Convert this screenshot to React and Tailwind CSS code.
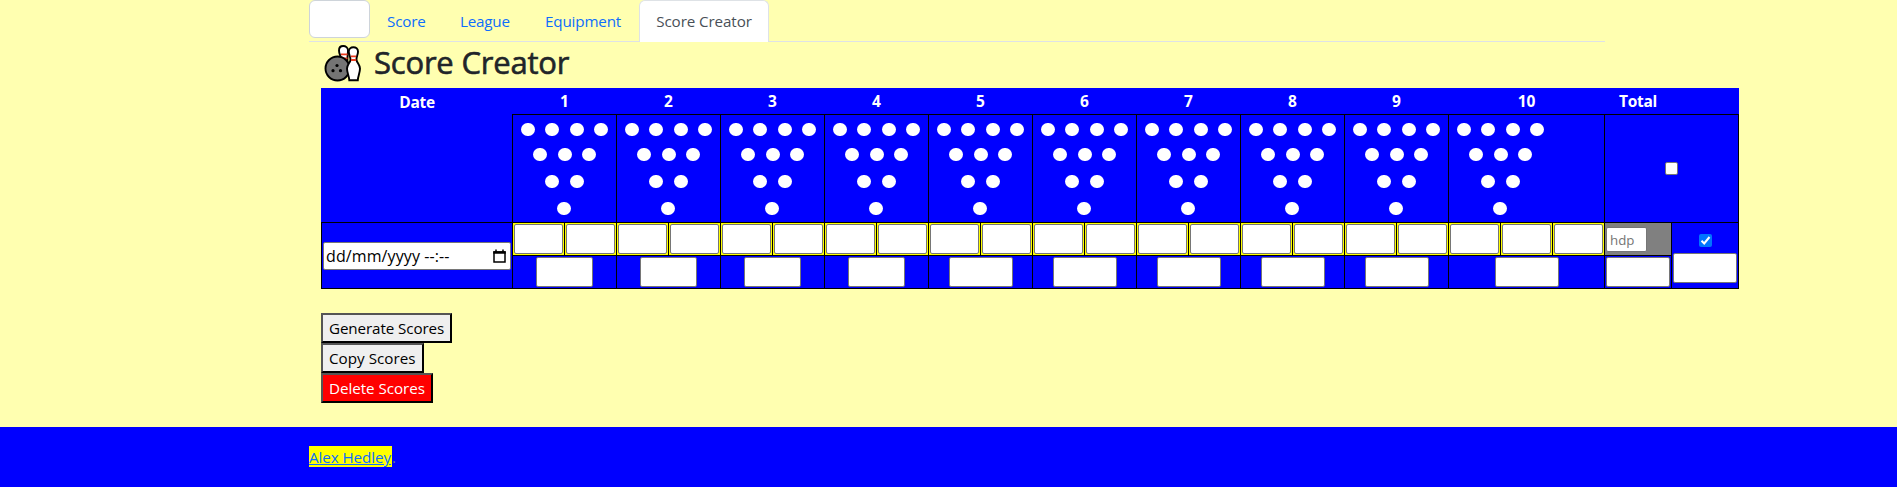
import React from "react";

const frames = [1, 2, 3, 4, 5, 6, 7, 8, 9, 10];

function Pins() {
  return (
    <div className="flex w-[103px] flex-col items-center pt-[8px]">
      {[
        { n: 4, h: "h-[25px]" },
        { n: 3, h: "h-[27px]" },
        { n: 2, h: "h-[27px]" },
        { n: 1, h: "h-[13px] mr-px" },
      ].map((row) => (
        <div key={row.n} className={`flex gap-[10.4px] ${row.h}`}>
          {Array.from({ length: row.n }, (_, i) => (
            <span key={i} className="h-[13px] w-[14px] rounded-full bg-white" />
          ))}
        </div>
      ))}
    </div>
  );
}

function Throw() {
  return (
    <div className="flex h-full flex-1 border-l border-black bg-[#ffff00] p-px">
      <input className="h-full w-full min-w-0 rounded-[2px] border border-[#767676] bg-white" />
    </div>
  );
}

function Frame({ number }) {
  const last = number === 10;
  return (
    <div className={`flex flex-col ${last ? "w-[156px]" : "w-[104px]"}`}>
      <div className="h-[26px] pt-px pl-px text-center text-[15.5px] leading-[24px] font-bold text-white">{number}</div>
      <div className="h-[108px] border-t border-l border-black">
        <Pins />
      </div>
      <div className="flex h-[33px] border-t border-black">
        <Throw />
        <Throw />
        {last && <Throw />}
      </div>
      <div className="flex h-[34px] justify-center border-y border-l border-black pt-px">
        <input className={`h-[30px] rounded-[2px] border border-[#767676] bg-white ${number > 4 ? "w-[64px]" : "mr-px w-[57px]"}`} />
      </div>
    </div>
  );
}

function BowlingIcon() {
  return (
    <svg className="h-[38px] w-[38px]" viewBox="0 0 38 38" stroke="#000" strokeWidth="1.9">
      <path d="M17 14C17 11 15 9 15 5.500C15 2.800 16.800 1 19.200 1S24 2.800 24 5.500C24 9 23 12 23.500 18L19 20Z" fill="#fff" />
      <path d="M17 9.300H23.500M17.200 13.300H23.500" stroke="#ea3b1e" strokeWidth="1.8" />
      <circle cx="13.500" cy="23.500" r="12" fill="#747474" />
      <g fill="#000" stroke="none">
        <circle cx="13" cy="20.500" r="1.600" />
        <circle cx="9" cy="25.700" r="1.600" />
        <circle cx="16.500" cy="25.700" r="1.600" />
      </g>
      <path d="M26.500 15C26.500 11.500 24.800 10 24.800 6.500C24.800 3.800 26.800 2.200 29.300 2.200S34 3.800 34 6.500C34 10 32.200 11.500 32.500 15C33 18 36 20 36 23.500C36 28 34 31 33.800 35.300H25.300C25.100 31 23 28 23 23.500C23 20 26 18 26.500 15Z" fill="#fff" />
      <path d="M26.800 11.300H32.200M27 15H32.200" stroke="#ea3b1e" strokeWidth="1.8" />
    </svg>
  );
}

function Calendar() {
  return (
    <svg className="h-[15px] w-[13px]" viewBox="0 0 13 15" fill="none" stroke="#000">
      <path d="M1 3H12V13H1Z" strokeWidth="1.500" />
      <path d="M.3 3.500H12.700" strokeWidth="2.500" />
      <path d="M3 .5V3M10 .5V3" strokeWidth="1.500" />
    </svg>
  );
}

export default function App() {
  const button =
    "h-[30px] border-2 border-t-[#555] border-l-[#555] border-r-black border-b-black pl-[6px] text-left leading-[26px] whitespace-nowrap";
  return (
    <div className="flex h-[487px] flex-col overflow-hidden bg-[#ffffb0] font-['Open_Sans','Noto_Sans',sans-serif] text-[15.2px] text-[#212529]">
      <nav className="ml-[309px] flex h-[42px] w-[1296px] border-b border-[#dee2e6] text-[#0d6efd]">
        <div className="h-[38px] w-[61px] rounded-[6px] border border-[#ced4da] bg-white" />
        <a className="w-[73px] pt-[9px] pl-[17px] leading-[24px] tracking-[-0.2px]">Score</a>
        <a className="w-[85px] pt-[9px] pl-[17px] leading-[24px] tracking-[-0.2px]">League</a>
        <a className="w-[111px] pt-[9px] pl-[17px] leading-[24px] tracking-[-0.15px]">Equipment</a>
        <a className="h-[42px] w-[130px] rounded-t-[6px] border border-b-0 border-[#dee2e6] bg-white pt-[8px] text-center leading-[24px] tracking-[-0.1px] whitespace-nowrap text-[#495057]">Score Creator</a>
      </nav>

      <main className="ml-[321px] flex h-[385px] flex-col">
        <div className="flex h-[46px] items-start">
          <div className="w-[53px] pt-[3px] pl-[3px]"><BowlingIcon /></div>
          <h1 className="text-[31px] leading-[40px] font-medium tracking-[-0.2px] whitespace-nowrap [-webkit-text-stroke:0.6px_#212529]">Score Creator</h1>
        </div>

        <div className="flex h-[201px] w-[1418px] bg-[#0000ff]">
          <div className="flex w-[191px] flex-col">
            <div className="h-[134px] pt-[2px] pl-px text-center text-[15.5px] leading-[24px] font-bold tracking-[-0.3px] text-white">Date</div>
            <div className="flex h-[67px] items-start border-y border-l border-black pt-[19px] pl-px">
              <div className="flex h-[28px] w-[188px] items-center justify-between rounded-[2px] border border-[#767676] bg-white pr-[4px] pl-[2px] text-black">
                <span className="text-[16px] tracking-[0.1px] whitespace-nowrap">dd/mm/yyyy --:--</span>
                <Calendar />
              </div>
            </div>
          </div>

          {frames.map((n) => <Frame key={n} number={n} />)}

          <div className="flex w-[135px] flex-col">
            <div className="h-[26px] w-[67px] pt-px pl-px text-center text-[15.5px] leading-[24px] font-bold tracking-[-0.3px] text-white">Total</div>
            <div className="flex h-[108px] items-start justify-center border-x border-t border-black pt-[47px]">
              <span className="mr-px h-[13px] w-[13px] rounded-[2px] border border-[#767676] bg-white" />
            </div>
            <div className="flex h-[67px]">
              <div className="flex w-[67px] flex-col">
                <div className="h-[33px] border-t border-l border-black bg-[#808080] pt-[4px] pl-px">
                  <input placeholder="hdp" className="h-[25px] w-[41px] rounded-[2px] border border-[#767676] bg-white px-[3px] text-[13.3px] placeholder:text-[#757575]" />
                </div>
                <div className="h-[34px] border-y border-l border-black pt-px pl-px">
                  <input className="block h-[30px] w-[64px] rounded-[2px] border border-[#767676] bg-white" />
                </div>
              </div>
              <div className="flex w-[68px] flex-col items-center border border-black pt-[11px]">
                <span className="flex h-[13px] w-[13px] items-center justify-center rounded-[2px] bg-[#0075ff]">
                  <svg className="h-[11px] w-[11px]" viewBox="0 0 11 11" fill="none" stroke="#fff" strokeWidth="2">
                    <path d="M1.500 5.800L4.200 8.500L9.500 2" />
                  </svg>
                </span>
                <input className="mt-[6px] h-[30px] w-[64px] rounded-[2px] border border-[#767676] bg-white" />
              </div>
            </div>
          </div>
        </div>

        <div className="flex flex-col items-start pt-[24px] text-black">
          <button className={`${button} w-[131px] bg-[#efefef] tracking-[-0.1px]`}>Generate Scores</button>
          <button className={`${button} w-[103px] bg-[#efefef] tracking-[0.02px]`}>Copy Scores</button>
          <button className={`${button} w-[112px] bg-[#ff0000] tracking-[-0.05px] text-white`}>Delete Scores</button>
        </div>
      </main>

      <footer className="h-[60px] bg-[#0000ff] pt-[19px] pl-[309px] leading-[22px]">
        <a className="inline-block h-[21px] w-[83px] bg-[#ffff00] tracking-[-0.08px] whitespace-nowrap text-[#0d6efd] underline">Alex Hedley</a>
        <span className="text-[#6c757d]">.</span>
      </footer>
    </div>
  );
}
